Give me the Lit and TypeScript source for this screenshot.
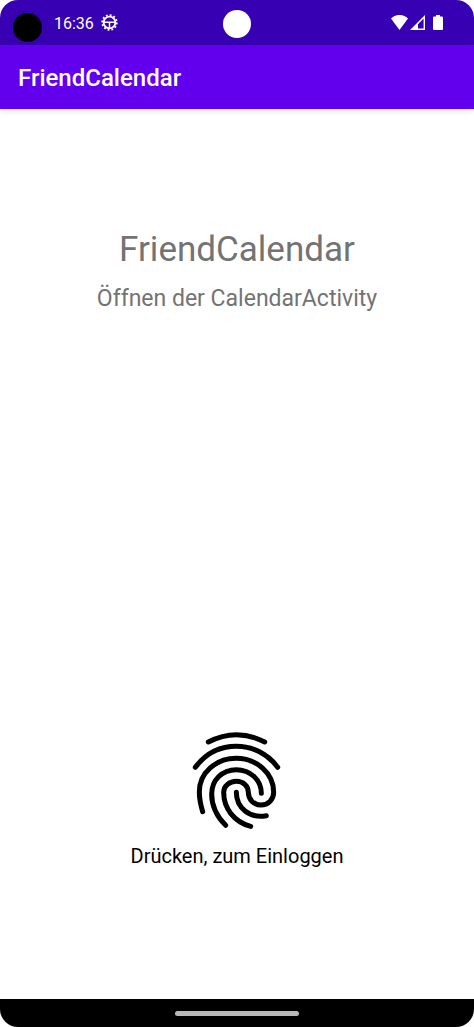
import { LitElement, html, css } from "lit";
import { customElement, property } from "lit/decorators.js";

@customElement("status-bar")
class StatusBar extends LitElement {
  @property() time = "";

  static styles = css`
    :host {
      display: grid;
      grid-template-columns: 1fr auto 1fr;
      align-items: center;
      height: 45px;
      padding: 0 31px 0 13px;
      background: #3700b3;
      color: #fff;
      box-sizing: border-box;
    }
    .left,
    .right {
      display: flex;
      align-items: center;
    }
    .left {
      gap: 7px;
    }
    .right {
      justify-content: flex-end;
      gap: 2px;
    }
    .lens {
      width: 29px;
      height: 29px;
      border-radius: 50%;
      background: #000;
      margin: 9px 5px 0 0;
    }
    .camera {
      width: 28px;
      height: 28px;
      border-radius: 50%;
      background: #fff;
      margin: 2px 0 0 18px;
    }
    .battery {
      margin-left: 6px;
    }
    .time {
      padding-top: 2px;
      font-size: 16px;
      line-height: 20px;
    }
    svg {
      display: block;
    }
  `;

  render() {
    return html`
      <div class="left">
        <span class="lens"></span>
        <span class="time">${this.time}</span>
        <svg width="17" height="17" viewBox="0 0 18 18" fill="none" stroke="#fff">
          <circle cx="9" cy="9" r="6.2" stroke-width="2" />
          <circle cx="9" cy="9" r="7.8" stroke-width="1.8" stroke-dasharray="2 2.08" />
          <path d="M3 8.8H15M9 9V15" stroke-width="1.6" />
        </svg>
      </div>
      <span class="camera"></span>
      <div class="right">
        <svg width="17" height="15" viewBox="0 0 17 15" fill="#fff">
          <path d="M0 3.5C5-1.2 12-1.2 17 3.5L8.5 15Z" />
        </svg>
        <svg width="15" height="15" viewBox="0 0 15 15">
          <path fill="#fff" fill-rule="evenodd" d="M15 0V15H0ZM13.6 3.6L8 9.2V13.6H13.6Z" />
        </svg>
        <svg class="battery" width="10" height="15" viewBox="0 0 10 15" fill="#fff">
          <path d="M3 0H7V1.5H9Q10 1.5 10 2.5V14Q10 15 9 15H1Q0 15 0 14V2.5Q0 1.5 1 1.5H3Z" />
        </svg>
      </div>
    `;
  }
}

@customElement("fingerprint-login")
class FingerprintLogin extends LitElement {
  static styles = css`
    button {
      display: flex;
      flex-direction: column;
      align-items: center;
      gap: 14px;
      padding: 0;
      border: 0;
      background: none;
      color: #000;
      font: 400 20px/24px Roboto, sans-serif;
      cursor: pointer;
    }
    svg {
      display: block;
    }
  `;

  render() {
    return html`
      <button type="button">
        <svg
          width="90"
          height="100"
          viewBox="36 30 270 300"
          fill="none"
          stroke="#000"
          stroke-width="15"
          stroke-linecap="round"
          aria-hidden="true"
        >
          <path d="M85 66Q169 22 254 66" />
          <path d="M46 142C76 102 120 79 169 79S264 102 293 142" />
          <path
            d="M68 275C62 255 58 235 58 216C58 158 108 115 169 115S281 160 281 217C281 239 264 255 243 255S205 239 205 217C205 198 189 184 169 184S131 198 131 217C131 266 163 306 212 319"
          />
          <path d="M137 316C108 287 95 256 95 222C95 180 127 149 169 149S244 180 244 220" />
          <path d="M169 217C169 264 209 296 259 287" />
        </svg>
        <span>Drücken, zum Einloggen</span>
      </button>
    `;
  }
}

@customElement("app-root")
class AppRoot extends LitElement {
  static styles = css`
    :host {
      display: block;
      background: #fff;
      font-family: Roboto, sans-serif;
    }
    .screen {
      display: flex;
      flex-direction: column;
      min-height: 100vh;
      border-radius: 18px;
      overflow: hidden;
      background: #fff;
    }
    .app-bar {
      display: flex;
      align-items: center;
      height: 64px;
      padding: 2px 18px 0;
      box-sizing: border-box;
      background: #6200ee;
      color: #fff;
      box-shadow: 0 2px 6px rgba(0, 0, 0, 0.12);
    }
    .app-title {
      margin: 0;
      font-size: 24px;
      line-height: 28px;
      font-weight: 500;
    }
    main {
      flex: 1;
      display: flex;
      flex-direction: column;
      align-items: center;
      justify-content: space-between;
      padding: 120px 16px 131px;
    }
    .intro {
      text-align: center;
      color: #737373;
    }
    .name {
      margin: 0;
      font-size: 35px;
      line-height: 42px;
      font-weight: 400;
    }
    .hint {
      margin: 14px 0 0;
      font-size: 23px;
      line-height: 28px;
    }
    .nav-bar {
      display: flex;
      align-items: center;
      justify-content: center;
      height: 28px;
      background: #000;
    }
    .handle {
      width: 124px;
      height: 5px;
      border-radius: 3px;
      background: #b8b8b8;
    }
  `;

  render() {
    return html`
      <div class="screen">
        <status-bar time="16:36"></status-bar>
        <header class="app-bar"><h1 class="app-title">FriendCalendar</h1></header>
        <main>
          <div class="intro">
            <h2 class="name">FriendCalendar</h2>
            <p class="hint">Öffnen der CalendarActivity</p>
          </div>
          <fingerprint-login></fingerprint-login>
        </main>
        <div class="nav-bar"><span class="handle"></span></div>
      </div>
    `;
  }
}
